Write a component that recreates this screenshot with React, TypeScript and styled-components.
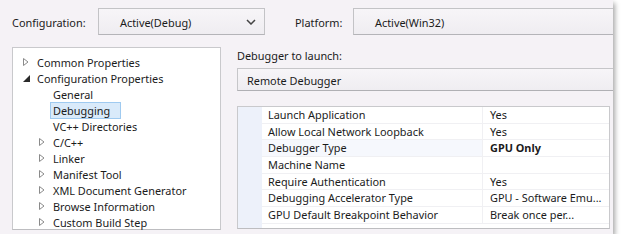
import React from 'react';
import styled, { createGlobalStyle } from 'styled-components';

const GlobalStyle = createGlobalStyle`
  html, body {
    margin: 0;
    padding: 0;
    background: #ffffff;
  }
  body {
    font-family: 'Noto Sans', 'Open Sans', sans-serif;
    font-size: 10.9px;
    color: #1b1b1b;
  }
`;

const Window = styled.div`
  width: 613px;
  height: 234px;
  background: #f5f2f6;
  box-shadow: 2px 3px 5px rgba(0, 0, 0, 0.35);
  display: flex;
  flex-direction: column;
  box-sizing: border-box;
  overflow: hidden;
`;

const TopBar = styled.div`
  display: flex;
  align-items: center;
  padding: 8px 0 0 12px;
  height: 27px;
`;

const Label = styled.span<{ $w?: number; $ml?: number }>`
  width: ${(p) => (p.$w ? `${p.$w}px` : 'auto')};
  margin-left: ${(p) => p.$ml || 0}px;
  white-space: nowrap;
  padding-top: 1px;
`;

const Select = styled.div<{ $w?: number; $open?: boolean }>`
  display: flex;
  align-items: center;
  justify-content: space-between;
  box-sizing: border-box;
  height: 27px;
  ${(p) => (p.$w ? `width: ${p.$w}px;` : 'flex: 1;')}
  padding: 1px 8px 0 21px;
  background: linear-gradient(#f7f5f8, #efedf1);
  border: 1px solid #c3c3c6;
  border-bottom-color: #b4b4b8;
  ${(p) => (p.$open ? '' : 'border-right: none;')}

  svg {
    flex: none;
  }
`;

const Body = styled.div`
  display: flex;
  margin-top: 12px;
  padding-left: 12px;
`;

const Tree = styled.ul`
  list-style: none;
  margin: 0;
  padding: 6px 0 0 0;
  width: 209px;
  height: 183px;
  box-sizing: border-box;
  background: #ffffff;
  border: 1px solid #c9c9cc;
  border-bottom-color: #bdbdc0;
`;

const TreeRow = styled.li<{ $level: number }>`
  display: flex;
  align-items: center;
  height: 16px;
  padding-left: ${(p) => (p.$level === 0 ? 8 : 24)}px;
  white-space: nowrap;
`;

const Toggle = styled.span`
  width: 16px;
  height: 16px;
  display: flex;
  align-items: center;
  justify-content: flex-start;
  padding-left: 2px;
  box-sizing: border-box;
`;

const ItemText = styled.span<{ $selected?: boolean }>`
  display: inline-block;
  line-height: 15px;
  padding: 0 10px 0 2px;
  margin-left: -3px;
  border: 1px solid ${(p) => (p.$selected ? '#9fcaf0' : 'transparent')};
  background: ${(p) => (p.$selected ? '#d9eafa' : 'transparent')};
`;

const RightPane = styled.div`
  flex: 1;
  margin-left: 16px;
  display: flex;
  flex-direction: column;
`;

const Caption = styled.div`
  height: 16px;
  line-height: 17px;
`;

const LaunchBox = styled.div`
  margin-top: 5px;
  height: 23px;
  box-sizing: border-box;
  display: flex;
  align-items: center;
  padding: 1px 0 0 9px;
  background: linear-gradient(#f7f5f8, #efedf1);
  border: 1px solid #c6c6c9;
  border-bottom-color: #b0b0b4;
  border-right: none;
`;

const Grid = styled.div`
  margin-top: 15px;
  margin-right: 3px;
  height: 123px;
  box-sizing: border-box;
  background: #ffffff;
  border: 1px solid #c9c9cc;
  border-bottom-color: #bdbdc0;
  display: flex;
`;

const Gutter = styled.div`
  width: 24px;
  background: #edf1fa;
  flex: none;
`;

const Rows = styled.div`
  flex: 1;
  display: flex;
  flex-direction: column;
`;

const PropRow = styled.div<{ $active?: boolean }>`
  display: grid;
  grid-template-columns: 220px 1fr;
  height: 16.7px;
  border-bottom: 1px solid #f0f0f3;
  box-sizing: border-box;
  background: ${(p) => (p.$active ? '#f6f8fd' : 'transparent')};
`;

const Cell = styled.div<{ $bold?: boolean; $value?: boolean }>`
  padding-left: ${(p) => (p.$value ? 7 : 6)}px;
  line-height: 16px;
  white-space: nowrap;
  overflow: hidden;
  font-weight: ${(p) => (p.$bold ? 700 : 400)};
  border-left: ${(p) => (p.$value ? '1px solid #f0f0f3' : 'none')};
  background: ${(p) => (p.$value ? '#ffffff' : 'transparent')};
`;

const Chevron = () => (
  <svg width="10" height="6" viewBox="0 0 10 6">
    <path d="M1 1 L5 5 L9 1" fill="none" stroke="#444" strokeWidth="1.5" />
  </svg>
);

const Collapsed = () => (
  <svg width="6" height="8" viewBox="0 0 6 8">
    <path d="M0.5 0.5 L5 4 L0.5 7.5 Z" fill="#fff" stroke="#8a8a8a" strokeWidth="1" />
  </svg>
);

const Expanded = () => (
  <svg width="7" height="7" viewBox="0 0 7 7">
    <path d="M7 0 L7 7 L0 7 Z" fill="#2a2a2a" />
  </svg>
);

type Node = { label: string; level: number; toggle?: 'open' | 'closed'; selected?: boolean };

const nodes: Node[] = [
  { label: 'Common Properties', level: 0, toggle: 'closed' },
  { label: 'Configuration Properties', level: 0, toggle: 'open' },
  { label: 'General', level: 1 },
  { label: 'Debugging', level: 1, selected: true },
  { label: 'VC++ Directories', level: 1 },
  { label: 'C/C++', level: 1, toggle: 'closed' },
  { label: 'Linker', level: 1, toggle: 'closed' },
  { label: 'Manifest Tool', level: 1, toggle: 'closed' },
  { label: 'XML Document Generator', level: 1, toggle: 'closed' },
  { label: 'Browse Information', level: 1, toggle: 'closed' },
  { label: 'Custom Build Step', level: 1, toggle: 'closed' },
];

const props: { name: string; value: string; bold?: boolean }[] = [
  { name: 'Launch Application', value: 'Yes' },
  { name: 'Allow Local Network Loopback', value: 'Yes' },
  { name: 'Debugger Type', value: 'GPU Only', bold: true },
  { name: 'Machine Name', value: '' },
  { name: 'Require Authentication', value: 'Yes' },
  { name: 'Debugging Accelerator Type', value: 'GPU - Software Emu...' },
  { name: 'GPU Default Breakpoint Behavior', value: 'Break once per...' },
];

const App = () => {
  return (
    <>
      <GlobalStyle />
      <Window>
        <TopBar>
          <Label $w={86}>Configuration:</Label>
          <Select $w={167} $open>
            <span>Active(Debug)</span>
            <Chevron />
          </Select>
          <Label $w={58} $ml={30}>Platform:</Label>
          <Select>
            <span>Active(Win32)</span>
          </Select>
        </TopBar>
        <Body>
          <Tree>
            {nodes.map((n) => (
              <TreeRow key={n.label} $level={n.level}>
                <Toggle>
                  {n.toggle === 'closed' && <Collapsed />}
                  {n.toggle === 'open' && <Expanded />}
                </Toggle>
                <ItemText $selected={n.selected}>{n.label}</ItemText>
              </TreeRow>
            ))}
          </Tree>
          <RightPane>
            <Caption>Debugger to launch:</Caption>
            <LaunchBox>Remote Debugger</LaunchBox>
            <Grid>
              <Gutter />
              <Rows>
                {props.map((r) => (
                  <PropRow key={r.name} $active={r.bold}>
                    <Cell>{r.name}</Cell>
                    <Cell $value $bold={r.bold}>{r.value}</Cell>
                  </PropRow>
                ))}
              </Rows>
            </Grid>
          </RightPane>
        </Body>
      </Window>
    </>
  );
};

export default App;
